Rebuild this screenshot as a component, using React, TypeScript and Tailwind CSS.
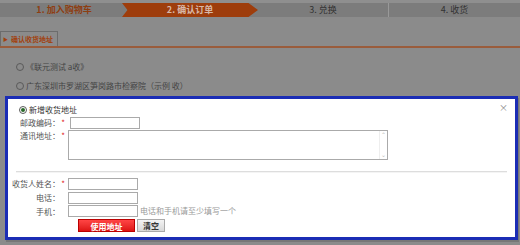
import React from "react";

const font = { fontFamily: '"Noto Sans CJK SC", "Noto Sans", sans-serif' };

function Radio({ checked }: { checked?: boolean }) {
  return (
    <span className="inline-flex items-center justify-center w-[8px] h-[8px] rounded-full border border-[#5a5a5a] bg-transparent mr-[2px]">
      {checked && <span className="w-[4px] h-[4px] rounded-full bg-[#2a6a2a]" />}
    </span>
  );
}

function Label({ text, required }: { text: string; required?: boolean }) {
  return (
    <div className="w-[60px] flex justify-end items-start pr-[2px] text-[#555] leading-[11px] whitespace-nowrap">
      <span>{text}</span>
      <span className="w-[6px] text-[#e02020] text-center">{required ? "*" : ""}</span>
    </div>
  );
}

export default function App() {
  return (
    <div className="w-[520px] h-[245px] overflow-hidden bg-[#8b8b8b] text-[8px]" style={font}>
      {/* Steps */}
      <div className="flex h-[17px] bg-[#7c7c7c] border-t-[3px] border-[#8f8f8f] text-[9px] leading-[14px]">
        <div className="w-[122px] text-center text-[#8e3e12] font-bold pl-[6px]">1. 加入购物车</div>
        <div className="w-[136px] bg-[#9e3d0c] text-center text-[#d8b8a8] font-bold [clip-path:polygon(0_0,93%_0,100%_50%,93%_100%,0_100%,4%_50%)]">
          2. 确认订单
        </div>
        <div className="w-[130px] text-center text-[#333]">3. 兑换</div>
        <div className="flex-1 text-center text-[#333] border-l border-[#999]">4. 收货</div>
      </div>

      {/* Tab */}
      <div className="mt-[15px] flex items-end border-b-[2px] border-[#9a5c3c] h-[16px]">
        <div className="h-[15px] w-[58px] border border-b-0 border-[#6c6c6c] flex items-center pl-[2px] text-[#a2410d] font-bold whitespace-nowrap text-[7px]">
          <span className="text-[5px] mr-[3px]">▶</span>
          <span>确认收货地址</span>
        </div>
      </div>

      {/* Existing addresses */}
      <div className="pl-[16px] pt-[14px] text-[#444] leading-[10px]">
        <div className="flex items-center h-[10px]">
          <Radio />
          <span>《联元测试 a收》</span>
        </div>
        <div className="flex items-center h-[10px] mt-[9px]">
          <Radio />
          <span>广东深圳市罗湖区笋岗路市检察院（示例 收）</span>
        </div>
      </div>

      {/* New address box */}
      <div className="ml-[5px] mt-[5px] w-[513px] h-[144px] border-[3px] border-[#1b2db5] bg-white shadow-[1px_2px_0_#777] relative">
        <span className="absolute right-[7px] top-[4px] text-[#888] text-[9px] leading-none">×</span>
        <div className="pl-[11px] pt-[6px] text-[#333] flex items-center h-[16px]">
          <Radio checked />
          <span>新增收货地址</span>
        </div>
        <div className="flex mt-[2px] h-[12px]">
          <Label text="邮政编码：" required />
          <div className="ml-[2px] w-[70px] h-[12px] border border-[#aaa]" />
        </div>
        <div className="flex mt-[1px]">
          <Label text="通讯地址：" required />
          <div className="w-[320px] h-[30px] border border-[#aaa] flex justify-end">
            <div className="w-[8px] flex flex-col justify-between text-[#bbb] text-[6px] leading-[8px] items-center border-l border-[#eee]">
              <span>⌃</span>
              <span>⌄</span>
            </div>
          </div>
        </div>
        <div className="mx-[8px] mt-[11px] h-[2px] border-t border-[#ddd] bg-[#f4f4f4]" />
        <div className="flex mt-[5px] h-[12px]">
          <Label text="收货人姓名：" required />
          <div className="w-[70px] h-[12px] border border-[#aaa]" />
        </div>
        <div className="flex mt-[2px] h-[12px]">
          <Label text="电话：" />
          <div className="w-[70px] h-[12px] border border-[#aaa]" />
        </div>
        <div className="flex mt-[1px] h-[12px] items-center">
          <Label text="手机：" />
          <div className="w-[70px] h-[12px] border border-[#aaa]" />
          <span className="ml-[2px] text-[#999]">电话和手机请至少填写一个</span>
        </div>
        <div className="flex ml-[70px] mt-[2px] gap-[2px]">
          <button className="w-[57px] h-[13px] bg-gradient-to-b from-[#f44] to-[#d11] text-white font-bold leading-[13px] border border-[#b00]">
            使用地址
          </button>
          <button className="w-[28px] h-[13px] bg-gradient-to-b from-[#f4f4f4] to-[#d8d8d8] text-[#333] font-bold leading-[11px] border border-[#aaa]">
            清空
          </button>
        </div>
      </div>
    </div>
  );
}
